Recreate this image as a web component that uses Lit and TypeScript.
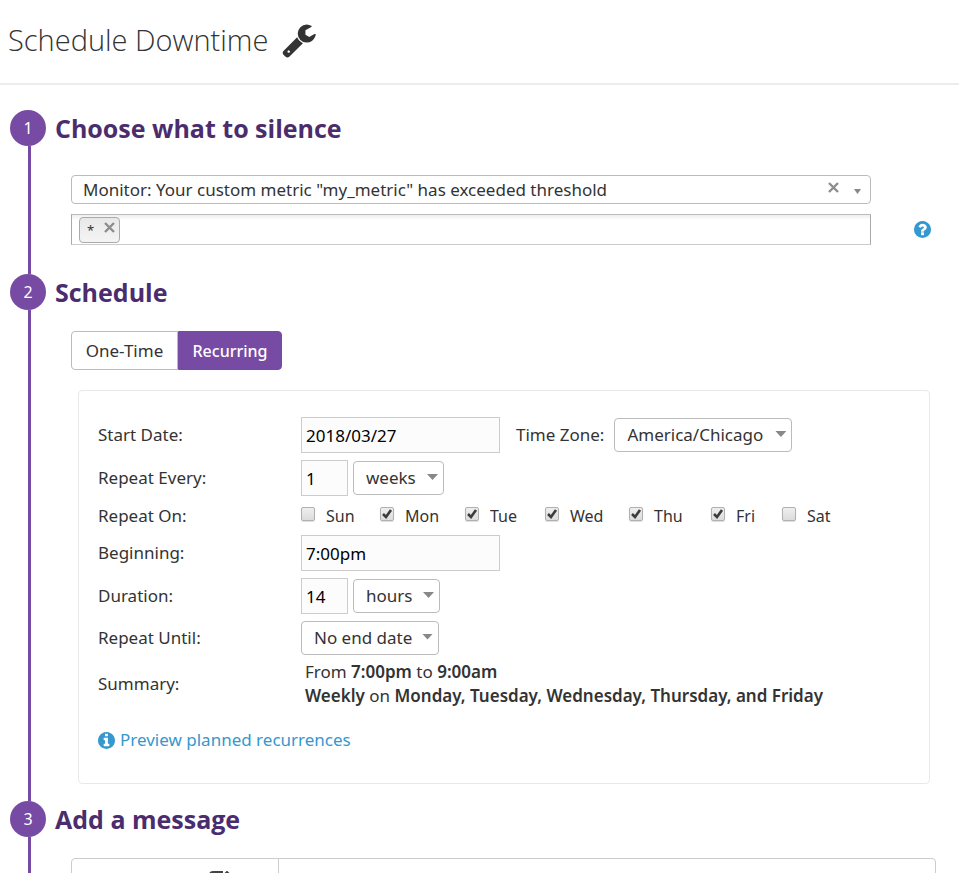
import { LitElement, html, css, svg } from "lit";
import { customElement, state } from "lit/decorators.js";

const WRENCH =
  "M448 1472q0-26-19-45t-45-19-45 19-19 45 19 45 45 19 45-19 19-45zm644-420l-682 682q-37 37-90 37-52 0-91-37l-106-108q-38-36-38-90 0-53 38-91l681-681q39 98 114.5 173.5t173.5 114.5zm634-435q0 39-23 106-47 134-164.5 217.5t-258.5 83.5q-185 0-316.5-131.5t-131.5-316.5 131.5-316.5 316.5-131.5q58 0 121.5 16.5t107.5 46.5q16 11 16 28t-16 28l-293 169v224l193 107q5-3 79-48.5t135.5-81 70.5-35.5q15 0 23.5 10t8.5 25z";
const HELP =
  "M1024 1376v-192q0-14-9-23t-23-9h-192q-14 0-23 9t-9 23v192q0 14 9 23t23 9h192q14 0 23-9t9-23zm256-672q0-88-55.5-163t-138.5-116-170-41q-243 0-371 213-15 24 8 42l132 100q7 6 19 6 16 0 25-12 53-68 86-92 34-24 86-24 48 0 85.5 26t37.5 59q0 38-20 61t-68 45q-63 28-115.5 86.5t-52.5 125.5v36q0 14 9 23t23 9h192q14 0 23-9t9-23q0-19 21.5-49.5t54.5-49.5q32-18 49-28.5t46-35 44.5-48 28-60.5 12.5-81zm384 192q0 209-103 385.5t-279.5 279.5-385.5 103-385.5-103-279.5-279.5-103-385.5 103-385.5 279.5-279.5 385.5-103 385.5 103 279.5 279.5 103 385.5z";
const INFO =
  "M1152 1376v-160q0-14-9-23t-23-9h-96v-512q0-14-9-23t-23-9h-320q-14 0-23 9t-9 23v160q0 14 9 23t23 9h96v320h-96q-14 0-23 9t-9 23v160q0 14 9 23t23 9h448q14 0 23-9t9-23zm-128-896v-160q0-14-9-23t-23-9h-192q-14 0-23 9t-9 23v160q0 14 9 23t23 9h192q14 0 23-9t9-23zm640 416q0 209-103 385.5t-279.5 279.5-385.5 103-385.5-103-279.5-279.5-103-385.5 103-385.5 279.5-279.5 385.5-103 385.5 103 279.5 279.5 103 385.5z";

const DAYS: [string, boolean][] = [
  ["Sun", false],
  ["Mon", true],
  ["Tue", true],
  ["Wed", true],
  ["Thu", true],
  ["Fri", true],
  ["Sat", false],
];

@customElement("app-root")
export class AppRoot extends LitElement {
  @state() private recurring = true;

  static styles = css`
    :host {
      display: block;
      height: 100vh;
      overflow: hidden;
      background: #fff;
      color: #333;
      font: 17px/24px "Noto Sans", "Open Sans", sans-serif;
    }
    *,
    *::before,
    *::after {
      box-sizing: border-box;
    }
    input,
    select,
    button {
      font: inherit;
      color: inherit;
      margin: 0;
      outline: none;
    }
    button {
      cursor: pointer;
    }
    .icon-button {
      display: flex;
      padding: 0;
      border: 0;
      background: none;
    }
    .header {
      display: flex;
      align-items: center;
      gap: 13px;
      height: 85px;
      padding: 0 8px 3px;
      border-bottom: 2px solid #ececec;
    }
    .title {
      margin: 0;
      font: 300 29px/40px "Open Sans", sans-serif;
    }
    .wrench {
      width: 36px;
      height: 36px;
      fill: #333;
    }
    .steps {
      padding: 25px 0 0 10px;
    }
    .step {
      display: grid;
      grid-template-columns: 36px minmax(0, 1fr);
      column-gap: 9px;
    }
    .rail {
      display: flex;
      flex-direction: column;
      align-items: center;
    }
    .number {
      width: 36px;
      height: 36px;
      border-radius: 50%;
      background: #774aa4;
      color: #fff;
      text-align: center;
      font-size: 16px;
      line-height: 36px;
    }
    .line {
      flex: 1;
      width: 3px;
      margin-left: 3px;
      background: #774aa4;
    }
    .heading {
      margin: 0;
      color: #4b2d6e;
      font: 700 25px/36px "Open Sans", sans-serif;
    }
    .targets {
      display: grid;
      grid-template-columns: minmax(0, 1fr) 18px;
      column-gap: 43px;
      row-gap: 10px;
      align-items: center;
      padding: 29px 27px 29px 16px;
    }
    .picker {
      position: relative;
      grid-column: 1;
    }
    select {
      display: block;
      appearance: none;
      width: 100%;
      height: 34px;
      padding: 0 12px;
      border: 1px solid #bbb;
      border-radius: 4px;
      background: #fff;
    }
    .picker select {
      height: 29px;
      padding: 0 60px 0 11px;
    }
    .caret {
      position: absolute;
      right: 10px;
      top: 14px;
      width: 7px;
      height: 5px;
      background: #888;
      clip-path: polygon(0 0, 100% 0, 50% 100%);
      pointer-events: none;
    }
    .clear {
      position: absolute;
      right: 32px;
      top: 7px;
    }
    .cross {
      width: 11px;
      height: 11px;
      stroke: #8d8d8d;
      stroke-width: 2.4;
      fill: none;
    }
    .tags {
      display: flex;
      grid-column: 1;
      align-items: center;
      height: 31px;
      padding: 0 7px;
      border: 1px solid #aaa;
      border-top-color: #bbb;
      border-bottom-color: #ccc;
      background: linear-gradient(#eee, #fff 5px);
    }
    .tag {
      display: flex;
      flex: none;
      align-items: flex-start;
      justify-content: space-between;
      width: 41px;
      height: 26px;
      padding: 4px 4px 0 7px;
      border: 1px solid #aaa;
      border-radius: 4px;
      background: linear-gradient(#e8e8e8, #f4f4f4);
      font-size: 13px;
      line-height: 16px;
    }
    .tag-input {
      flex: 1;
      min-width: 0;
      height: 24px;
      border: 0;
      background: none;
    }
    .disc {
      width: 17px;
      height: 17px;
      fill: #3598ce;
    }
    .schedule {
      padding: 21px 29px 17px 16px;
    }
    .toggle {
      display: flex;
    }
    .toggle button {
      width: 107px;
      height: 39px;
      padding: 0;
      border: 1px solid #bbb;
      border-radius: 4px 0 0 4px;
      background: #fff;
    }
    .toggle button + button {
      width: 104px;
      border-radius: 0 4px 4px 0;
    }
    .toggle .on {
      border-color: #774aa4;
      background: #774aa4;
      color: #fff;
      font-size: 16px;
      font-weight: 500;
    }
    .panel {
      margin: 20px 0 0 7px;
      padding: 25px 19px 28px;
      border: 1px solid #e8e8e8;
      border-radius: 4px;
    }
    .form {
      display: grid;
      grid-template-columns: 203px minmax(0, 1fr);
      grid-template-rows: 38px 38px 27px 38px 38px 35px 48px;
      row-gap: 5px;
      align-items: center;
    }
    .controls {
      display: flex;
      align-items: center;
    }
    .text {
      width: 199px;
      height: 36px;
      padding: 0 4px;
      border: 1px solid #ccc;
      background: #fcfcfc;
      color: #000;
    }
    .short {
      width: 47px;
      margin-right: 5px;
    }
    .zone {
      margin: 0 10px 0 16px;
    }
    .drop {
      position: relative;
    }
    .drop .caret {
      right: 6px;
      width: 11px;
      height: 6px;
      top: 13px;
    }
    .zones {
      width: 178px;
    }
    .units {
      width: 91px;
    }
    .hours {
      width: 87px;
    }
    .until {
      width: 138px;
    }
    .days {
      display: grid;
      grid-template-columns: 79px 85px 80px 84px 82px 71px auto;
      justify-content: start;
      font-size: 16px;
    }
    .day {
      display: flex;
      align-items: center;
      gap: 11px;
    }
    .box {
      position: relative;
      display: flex;
      width: 14px;
      height: 24px;
      padding-top: 3px;
    }
    .box input {
      appearance: none;
      width: 14px;
      height: 14px;
      border: 1px solid #b0b0b0;
      border-radius: 2px;
      background: linear-gradient(#eee, #dcdcdc);
      box-shadow: 0 1px 1px #ddd;
    }
    .tick {
      position: absolute;
      left: 0;
      top: 3px;
      width: 14px;
      height: 14px;
      fill: none;
      stroke: #3c3c3c;
      stroke-width: 2.6;
      pointer-events: none;
      visibility: hidden;
    }
    .box input:checked + .tick {
      visibility: visible;
    }
    .summary {
      padding-left: 4px;
    }
    .summary b {
      font-weight: 600;
    }
    .preview {
      display: inline-flex;
      align-items: center;
      gap: 5px;
      margin-top: 20px;
      color: #3598ce;
      text-decoration: none;
    }
    .message {
      display: grid;
      grid-template-columns: 207px minmax(0, 1fr);
      height: 200px;
      margin: 21px 23px 0 16px;
      border: 1px solid #ccc;
      border-radius: 4px;
    }
    .pane {
      padding: 12px 0 0 137px;
      border-right: 1px solid #ccc;
    }
    .pencil {
      width: 22px;
      height: 22px;
      fill: none;
      stroke: #444;
      stroke-width: 2;
    }
  `;

  private cross() {
    return html`<svg class="cross" viewBox="0 0 11 11">${svg`<path d="M1 1l9 9M10 1l-9 9"/>`}</svg>`;
  }

  private disc(d: string) {
    return html`<svg class="disc" viewBox="128 128 1536 1536"><path d=${d} /></svg>`;
  }

  private drop(id: string, kind: string, value: string, label: string) {
    return html`<span class="drop ${kind}">
      <select id=${id} aria-label=${label}>
        <option>${value}</option>
      </select>
      <i class="caret"></i>
    </span>`;
  }

  private step(n: number, title: string, body: unknown) {
    return html`<section class="step">
      <div class="rail">
        <span class="number">${n}</span>
        <span class="line"></span>
      </div>
      <div>
        <h2 class="heading">${title}</h2>
        ${body}
      </div>
    </section>`;
  }

  private targets() {
    return html`<div class="targets">
      <div class="picker">
        <select aria-label="Monitor">
          <option>Monitor: Your custom metric "my_metric" has exceeded threshold</option>
        </select>
        <button class="icon-button clear" aria-label="Clear">${this.cross()}</button>
        <i class="caret"></i>
      </div>
      <div class="tags">
        <span class="tag">
          *
          <button class="icon-button" aria-label="Remove">${this.cross()}</button>
        </span>
        <input class="tag-input" aria-label="Scope" />
      </div>
      <button class="icon-button" aria-label="Help">${this.disc(HELP)}</button>
    </div>`;
  }

  private schedule() {
    return html`<div class="schedule">
      <div class="toggle">
        <button class=${this.recurring ? "" : "on"} @click=${() => (this.recurring = false)}>
          One-Time
        </button>
        <button class=${this.recurring ? "on" : ""} @click=${() => (this.recurring = true)}>
          Recurring
        </button>
      </div>
      <div class="panel">
        <div class="form">
          <label for="start">Start Date:</label>
          <div class="controls">
            <input id="start" class="text" value="2018/03/27" />
            <label class="zone" for="zone">Time Zone:</label>
            ${this.drop("zone", "zones", "America/Chicago", "Time Zone")}
          </div>
          <label for="every">Repeat Every:</label>
          <div class="controls">
            <input id="every" class="text short" value="1" />
            ${this.drop("unit", "units", "weeks", "Repeat unit")}
          </div>
          <span>Repeat On:</span>
          <div class="days">
            ${DAYS.map(
              ([name, on]) => html`<label class="day">
                <span class="box">
                  <input type="checkbox" ?checked=${on} />
                  <svg class="tick" viewBox="0 0 14 14"><path d="M3 7l3 3 5-7" /></svg>
                </span>
                ${name}
              </label>`
            )}
          </div>
          <label for="begin">Beginning:</label>
          <div class="controls"><input id="begin" class="text" value="7:00pm" /></div>
          <label for="duration">Duration:</label>
          <div class="controls">
            <input id="duration" class="text short" value="14" />
            ${this.drop("length", "hours", "hours", "Duration unit")}
          </div>
          <label for="until">Repeat Until:</label>
          <div class="controls">${this.drop("until", "until", "No end date", "Repeat Until")}</div>
          <span>Summary:</span>
          <div class="summary">
            From <b>7:00pm</b> to <b>9:00am</b><br />
            <b>Weekly</b> on <b>Monday, Tuesday, Wednesday, Thursday, and Friday</b>
          </div>
        </div>
        <a class="preview" href="#preview">${this.disc(INFO)}Preview planned recurrences</a>
      </div>
    </div>`;
  }

  private message() {
    return html`<div class="message">
      <div class="pane">
        <svg class="pencil" viewBox="0 0 22 22">
          <path d="M14 1H4Q1 1 1 4v13q0 3 3 3h12q3 0 3-3v-4M18 1l3 3-10 10H8v-3z" />
        </svg>
      </div>
    </div>`;
  }

  render() {
    return html`
      <header class="header">
        <h1 class="title">Schedule Downtime</h1>
        <svg class="wrench" viewBox="0 0 1792 1792"><path d=${WRENCH} /></svg>
      </header>
      <main class="steps">
        ${this.step(1, "Choose what to silence", this.targets())}
        ${this.step(2, "Schedule", this.schedule())}
        ${this.step(3, "Add a message", this.message())}
      </main>
    `;
  }
}
